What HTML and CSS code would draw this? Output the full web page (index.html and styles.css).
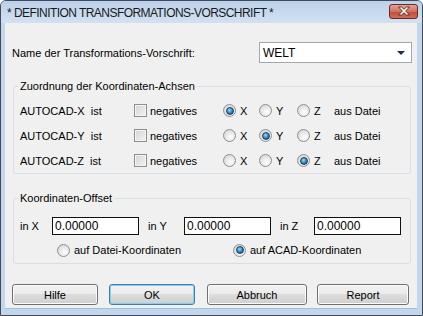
FILE: index.html
```html
<!DOCTYPE html>
<html lang="de">
<head>
  <meta charset="UTF-8" />
  <title>DEFINITION TRANSFORMATIONS-VORSCHRIFT</title>
  <link rel="stylesheet" href="styles.css">
</head>
<body>
  <div class="window">
    <!-- Titelleiste -->
    <div class="titlebar">
      <span class="title">* DEFINITION TRANSFORMATIONS-VORSCHRIFT *</span>
      <span class="close">
        <svg width="14" height="10" viewBox="0 0 14 10">
          <path d="M1.5 1 L4.5 1 L7 3.3 L9.5 1 L12.5 1 L8.6 5 L12.5 9 L9.5 9 L7 6.7 L4.5 9 L1.5 9 L5.4 5 Z" fill="#fff" stroke="#5a211a" stroke-width="0.9" stroke-linejoin="round"/>
        </svg>
      </span>
    </div>

    <div class="client">
      <div class="name-row">
        <label>Name der Transformations-Vorschrift:</label>
        <div class="combo">
          <span>WELT</span>
          <svg width="8" height="4" viewBox="0 0 8 4"><path d="M0 0 H8 L4 4 Z" fill="#1c2b5e"/></svg>
        </div>
      </div>

      <!-- Achsen -->
      <fieldset class="group axes">
        <legend>Zuordnung der Koordinaten-Achsen</legend>
        <div class="axis-row">
          <span>AUTOCAD-X&nbsp; ist</span>
          <span class="opt"><i class="check"></i>negatives</span>
          <span class="opt"><i class="radio on"></i>X</span>
          <span class="opt"><i class="radio"></i>Y</span>
          <span class="opt"><i class="radio"></i>Z</span>
          <span>aus Datei</span>
        </div>
        <div class="axis-row">
          <span>AUTOCAD-Y&nbsp; ist</span>
          <span class="opt"><i class="check"></i>negatives</span>
          <span class="opt"><i class="radio"></i>X</span>
          <span class="opt"><i class="radio on"></i>Y</span>
          <span class="opt"><i class="radio"></i>Z</span>
          <span>aus Datei</span>
        </div>
        <div class="axis-row">
          <span>AUTOCAD-Z&nbsp; ist</span>
          <span class="opt"><i class="check"></i>negatives</span>
          <span class="opt"><i class="radio"></i>X</span>
          <span class="opt"><i class="radio"></i>Y</span>
          <span class="opt"><i class="radio on"></i>Z</span>
          <span>aus Datei</span>
        </div>
      </fieldset>

      <!-- Offset -->
      <fieldset class="group offset">
        <legend>Koordinaten-Offset</legend>
        <div class="offset-row">
          <span class="lbl-x">in X</span>
          <span class="field">0.00000</span>
          <span class="lbl-y">in Y</span>
          <span class="field">0.00000</span>
          <span class="lbl-z">in Z</span>
          <span class="field">0.00000</span>
        </div>
        <div class="mode-row">
          <span class="opt mode-file"><i class="radio"></i>auf Datei-Koordinaten</span>
          <span class="opt"><i class="radio on"></i>auf ACAD-Koordinaten</span>
        </div>
      </fieldset>

      <div class="buttons">
        <button class="btn-help">Hilfe</button>
        <button class="btn-ok">OK</button>
        <button class="btn-cancel">Abbruch</button>
        <button class="btn-report">Report</button>
      </div>
    </div>
  </div>
</body>
</html>
```
FILE: styles.css
```css
html, body {
  margin: 0;
  padding: 0;
  background: #fff;
}
body {
  font-family: 'Liberation Sans', Arial, sans-serif;
  font-size: 11px;
  color: #000;
}
.window {
  width: 423px;
  height: 316px;
  box-sizing: border-box;
  border: 1px solid #3f4b5a;
  border-radius: 6px 6px 0 0;
  background: #c3d6ec;
  display: flex;
  flex-direction: column;
  overflow: hidden;
}
.titlebar {
  height: 22px;
  display: flex;
  align-items: center;
  padding: 0 4px 0 6px;
  background: linear-gradient(#bcd1ea, #d2e1f2);
}
.title {
  font-size: 12px;
  letter-spacing: -0.55px;
  color: #1a1a1a;
  flex: 1;
  margin-top: 1px;
}
.close {
  width: 27px;
  height: 13px;
  border: 1px solid #6a2a22;
  border-radius: 3px;
  background: linear-gradient(#e8a293, #d0705f 50%, #c04a37 51%, #cf6e57);
  display: flex;
  align-items: center;
  justify-content: center;
  margin-top: -2px;
}
.client {
  flex: 1;
  margin: 0 5px 6px 4px;
  background: #f0f0f0;
  padding: 19px 6px 0 8px;
  border-bottom: 1px solid #9ebedf;
}
.name-row {
  display: flex;
  align-items: center;
  margin-left: -1px;
  margin-right: -1px;
}
.name-row label {
  flex: 1;
}
.combo {
  height: 19px;
  border: 1px solid #a3a8b0;
  background: #fff;
  display: flex;
  align-items: center;
  justify-content: space-between;
  padding: 0 6px 0 3px;
  width: 142px;
  font-size: 12px;
}
.group {
  margin: 17px 0 0 0;
  border: 1px solid #d5dfe5;
  border-radius: 3px;
  padding: 5px 0 0 6px;
  min-width: 0;
}
.group legend {
  padding: 0 2px;
  margin-left: -2px;
  line-height: 13px;
}
.axis-row {
  display: grid;
  grid-template-columns: 114px 89px 36px 38px 37px auto;
  height: 25px;
  align-items: center;
}
.opt {
  display: flex;
  align-items: center;
}
.check {
  width: 11px;
  height: 11px;
  border: 1px solid #8e8f8f;
  background: linear-gradient(135deg, #d3d3d3, #f4f4f4);
  box-shadow: inset 0 0 0 1px #f4f4f4;
  margin: 0 3px 0 0;
}
.radio {
  width: 11px;
  height: 11px;
  border: 1px solid #8f8f8f;
  border-radius: 50%;
  background: radial-gradient(circle at 60% 65%, #ffffff, #e2e2e2 60%, #cacaca);
  margin-right: 4px;
  display: flex;
  align-items: center;
  justify-content: center;
}
.radio.on::after {
  content: '';
  width: 6px;
  height: 6px;
  border-radius: 50%;
  background: radial-gradient(circle at 40% 35%, #9ad8f6, #2a86c4 55%, #0d3f6c);
  border: 0.5px solid #1a3c5c;
}
.offset {
  margin-top: 18px;
  padding-top: 9px;
  padding-bottom: 1px;
}
.offset-row {
  display: flex;
  align-items: center;
  height: 24px;
}
.lbl-x { width: 32px; }
.lbl-y { width: 36px; margin-left: 9px; }
.lbl-z { width: 34px; margin-left: 9px; }
.field {
  width: 83px;
  height: 16px;
  line-height: 16px;
  border: 1px solid #111;
  background: #fff;
  padding-left: 2px;
  font-size: 12px;
}
.mode-row {
  display: flex;
  align-items: center;
  height: 24px;
  padding-left: 37px;
}
.mode-file {
  width: 176px;
}
.buttons {
  display: flex;
  margin: 20px 0 0 -1px;
}
button {
  height: 21px;
  font-family: 'Liberation Sans', Arial, sans-serif;
  font-size: 11px;
  color: #000;
  border: 1px solid #707070;
  border-radius: 3px;
  background: linear-gradient(#f2f2f2, #ebebeb 45%, #dddddd 50%, #cfcfcf);
  box-shadow: inset 0 0 0 1px #fbfbfb;
  padding: 0;
}
.btn-help { width: 86px; }
.btn-ok {
  width: 86px;
  margin-left: 11px;
  border-color: #3c7fb1;
  box-shadow: inset 0 0 0 1px #7fd0f4;
}
.btn-cancel { width: 100px; margin-left: 12px; }
.btn-report { width: 92px; margin-left: 10px; }
```
